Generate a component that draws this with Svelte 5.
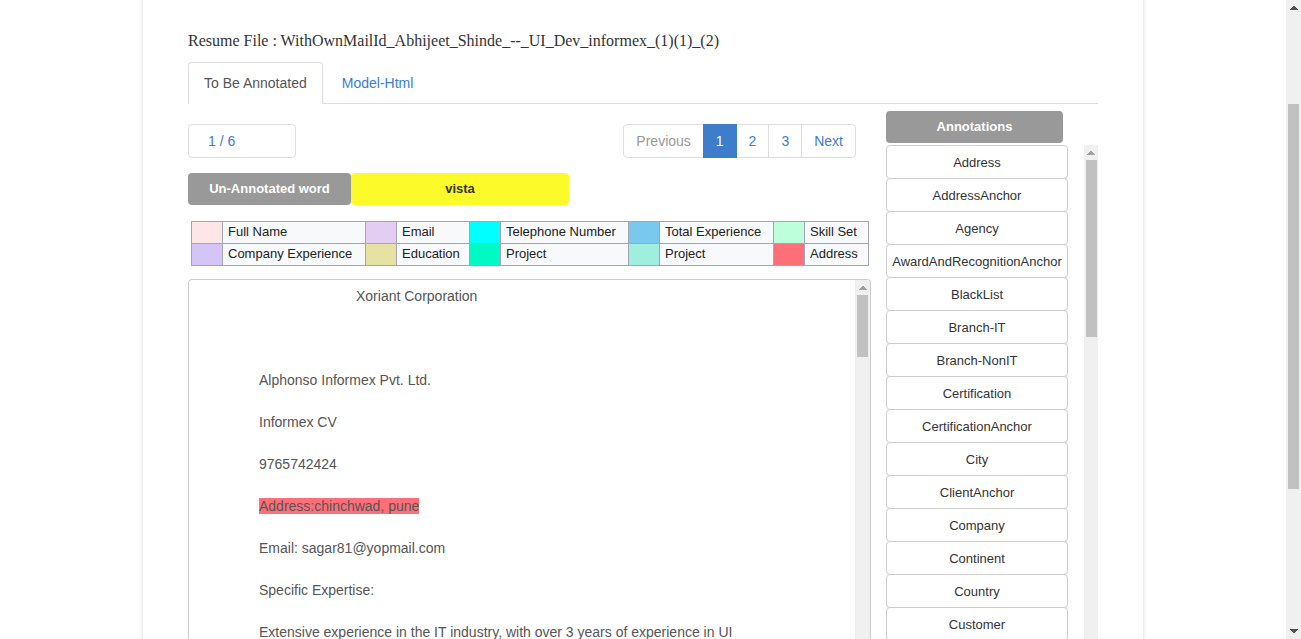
<script>
  const annotations = [
    'Address', 'AddressAnchor', 'Agency', 'AwardAndRecognitionAnchor', 'BlackList',
    'Branch-IT', 'Branch-NonIT', 'Certification', 'CertificationAnchor', 'City',
    'ClientAnchor', 'Company', 'Continent', 'Country', 'Customer'
  ];
  const legend = [
    [
      ['#ffe6e6', 'Full Name'], ['#e3cdf1', 'Email'], ['#00ffff', 'Telephone Number'],
      ['#79c9ef', 'Total Experience'], ['#bdffdb', 'Skill Set']
    ],
    [
      ['#d4c5f9', 'Company Experience'], ['#e6e2a4', 'Education'], ['#00fac4', 'Project'],
      ['#a0eedd', 'Project'], ['#ff6f79', 'Address']
    ]
  ];
  const labelWidths = [143, 73, 128, 114, 64];
  const paragraphs = [
    { text: 'Alphonso Informex Pvt. Ltd.' },
    { text: 'Informex CV' },
    { text: '9765742424' },
    { text: 'Address:chinchwad, pune', marked: true },
    { text: 'Email: sagar81@yopmail.com' },
    { text: 'Specific Expertise:' },
    { text: 'Extensive experience in the IT industry, with over 3 years of experience in UI' }
  ];
  const pages = [1, 2, 3];
  let tab = $state('annotate');
  let page = $state(1);
</script>

{#snippet arrow(down)}
  <svg class="arrow" width="8" height="4" viewBox="0 0 8 4" shape-rendering="crispEdges" aria-hidden="true">
    <path d={down ? 'M0 0h8v1H7v1H6v1H5v1H3V3H2V2H1V1H0z' : 'M0 4h8V3H7V2H6V1H5V0H3v1H2v1H1v1H0z'} fill="currentColor" />
  </svg>
{/snippet}

<div class="app">
  <main class="sheet">
    <h1>Resume File : WithOwnMailId_Abhijeet_Shinde_--_UI_Dev_informex_(1)(1)_(2)</h1>
    <nav class="tabs">
      <a href="#annotate" class:current={tab === 'annotate'} onclick={() => (tab = 'annotate')}>To Be Annotated</a>
      <a href="#model" class:current={tab === 'model'} onclick={() => (tab = 'model')}>Model-Html</a>
    </nav>

    <div class="columns">
      <section class="work">
        <div class="pager">
          <a class="counter" href="#count">1 / 6</a>
          <nav class="pagination">
            <a href="#previous" class="muted">Previous</a>
            {#each pages as n}
              <a href="#page" class:active={page === n} onclick={() => (page = n)}>{n}</a>
            {/each}
            <a href="#next">Next</a>
          </nav>
        </div>

        <div class="word">
          <div class="badge">Un-Annotated word</div>
          <div class="value">vista</div>
        </div>

        <div class="legend">
          <table>
            <colgroup>
              {#each labelWidths as w}
                <col style:width="31px" />
                <col style:width="{w}px" />
              {/each}
            </colgroup>
            <tbody>
              {#each legend as row}
                <tr>
                  {#each row as [color, label]}
                    <td style:background={color}></td>
                    <td class="label">{label}</td>
                  {/each}
                </tr>
              {/each}
            </tbody>
          </table>
        </div>

        <div class="document">
          <article>
            <p class="title">Xoriant Corporation</p>
            {#each paragraphs as p}
              <p>{#if p.marked}<mark>{p.text}</mark>{:else}{p.text}{/if}</p>
            {/each}
          </article>
          <div class="track inner wide">
            {@render arrow(false)}
            <div class="thumb short"></div>
          </div>
        </div>
      </section>

      <aside>
        <h2>Annotations</h2>
        <div class="picker">
          <div class="list">
            {#each annotations as name}
              <button type="button">{name}</button>
            {/each}
          </div>
          <div class="track inner">
            {@render arrow(false)}
            <div class="thumb medium"></div>
          </div>
        </div>
      </aside>
    </div>
  </main>

  <div class="track page">
    {@render arrow(false)}
    <div class="lane"><div class="thumb long"></div></div>
    {@render arrow(true)}
  </div>
</div>

<style>
  :global(body) {
    margin: 0;
    background: #fff;
  }
  .app, .app :global(*) {
    box-sizing: border-box;
  }
  .app {
    display: flex;
    height: 100vh;
    overflow: hidden;
    font: 14px/20px "Liberation Sans", Arial, sans-serif;
    color: #555;
  }
  a {
    color: #3d7dcc;
    text-decoration: none;
  }
  .sheet {
    display: flex;
    flex-direction: column;
    flex: 1;
    min-width: 0;
    max-width: 1002px;
    margin: 0 auto;
    padding: 30px 45px 0;
    border: solid #eee;
    border-width: 0 1px;
    box-shadow: 0 0 2px 1px #eee;
  }
  h1 {
    margin: 0 0 10px;
    font: 16px/22px "Liberation Serif", "Times New Roman", serif;
    color: #333;
  }
  .tabs {
    display: flex;
    gap: 3px;
    border-bottom: 1px solid #ddd;
  }
  .tabs a {
    margin-bottom: -1px;
    padding: 10px 15px;
    border: 1px solid transparent;
    border-radius: 4px 4px 0 0;
  }
  .tabs .current {
    color: #555;
    background: #fff;
    border-color: #ddd #ddd #fff;
  }
  .columns {
    display: flex;
    gap: 15px;
    flex: 1;
    min-height: 0;
  }
  .work {
    display: flex;
    flex-direction: column;
    flex: 1;
    min-width: 0;
    padding-top: 20px;
  }
  .pager {
    display: flex;
    justify-content: space-between;
    padding-right: 15px;
  }
  .counter {
    width: 108px;
    padding: 6px 19px;
    border: 1px solid #ddd;
    border-radius: 4px;
  }
  .pagination {
    display: flex;
  }
  .pagination a {
    margin-left: -1px;
    padding: 6px 12px;
    border: 1px solid #ddd;
  }
  .pagination a:first-child {
    border-radius: 4px 0 0 4px;
  }
  .pagination a:last-child {
    border-radius: 0 4px 4px 0;
  }
  .pagination .muted {
    color: #999;
  }
  .pagination .active {
    z-index: 1;
    color: #fff;
    background: #3d7dcc;
    border-color: #3d7dcc;
  }
  .word {
    display: flex;
    margin: 15px 0 16px;
    font-size: 13px;
    font-weight: bold;
    line-height: 32px;
    text-align: center;
  }
  .badge {
    width: 163px;
    border-radius: 4px;
    color: #fff;
    background: #999;
  }
  .value {
    width: 218px;
    border-radius: 4px;
    color: #333;
    background: #fcfa28;
  }
  .legend {
    padding: 0 2px 0 3px;
  }
  table {
    width: 100%;
    table-layout: fixed;
    border-collapse: collapse;
    font-size: 13px;
    line-height: 19px;
    color: #222;
    background: #f8f9fb;
  }
  td {
    height: 22px;
    padding: 0;
    border: 1px solid #a2a6b4;
    vertical-align: top;
  }
  .label {
    padding-left: 5px;
    white-space: nowrap;
  }
  .document {
    display: flex;
    flex: 1;
    min-height: 0;
    margin-top: 13px;
    border: 1px solid #ccc;
    border-bottom: 0;
    border-radius: 4px 4px 0 0;
    overflow: hidden;
  }
  article {
    flex: 1;
    min-width: 0;
    padding: 6px 70px 0;
    line-height: 21px;
  }
  p {
    margin: 0 0 21px;
  }
  .title {
    margin-bottom: 63px;
    padding-left: 97px;
  }
  mark {
    color: inherit;
    background: #ff6f79;
  }
  aside {
    display: flex;
    flex-direction: column;
    width: 212px;
    padding-top: 7px;
  }
  h2 {
    width: 177px;
    margin: 0 0 2px;
    border-radius: 4px;
    font-size: 13px;
    line-height: 32px;
    text-align: center;
    color: #fff;
    background: #999;
  }
  .picker {
    display: flex;
    justify-content: space-between;
    flex: 1;
    min-height: 0;
  }
  .list {
    width: 182px;
    overflow: hidden;
  }
  button {
    display: block;
    width: 100%;
    height: 34px;
    margin: 0 0 -1px;
    padding: 2px 0 0;
    border: 1px solid #ccc;
    border-radius: 4px;
    font: 13px/20px "Liberation Sans", Arial, sans-serif;
    color: #333;
    background: #fff;
  }
  .track {
    display: flex;
    flex-direction: column;
    align-items: center;
    flex-shrink: 0;
    background: #f0f0f0;
  }
  .arrow {
    flex-shrink: 0;
  }
  .inner {
    width: 14px;
    padding-top: 6px;
    color: #a0a0a0;
  }
  .wide {
    width: 15px;
  }
  .inner .arrow {
    margin-bottom: 5px;
  }
  .page {
    width: 15px;
    padding: 6px 0;
    color: #505050;
  }
  .lane {
    flex: 1;
    padding: 94px 0 0;
  }
  .thumb {
    width: 11px;
    background: #c1c1c1;
  }
  .short {
    height: 62px;
  }
  .medium {
    height: 177px;
  }
  .long {
    height: 385px;
  }
</style>
